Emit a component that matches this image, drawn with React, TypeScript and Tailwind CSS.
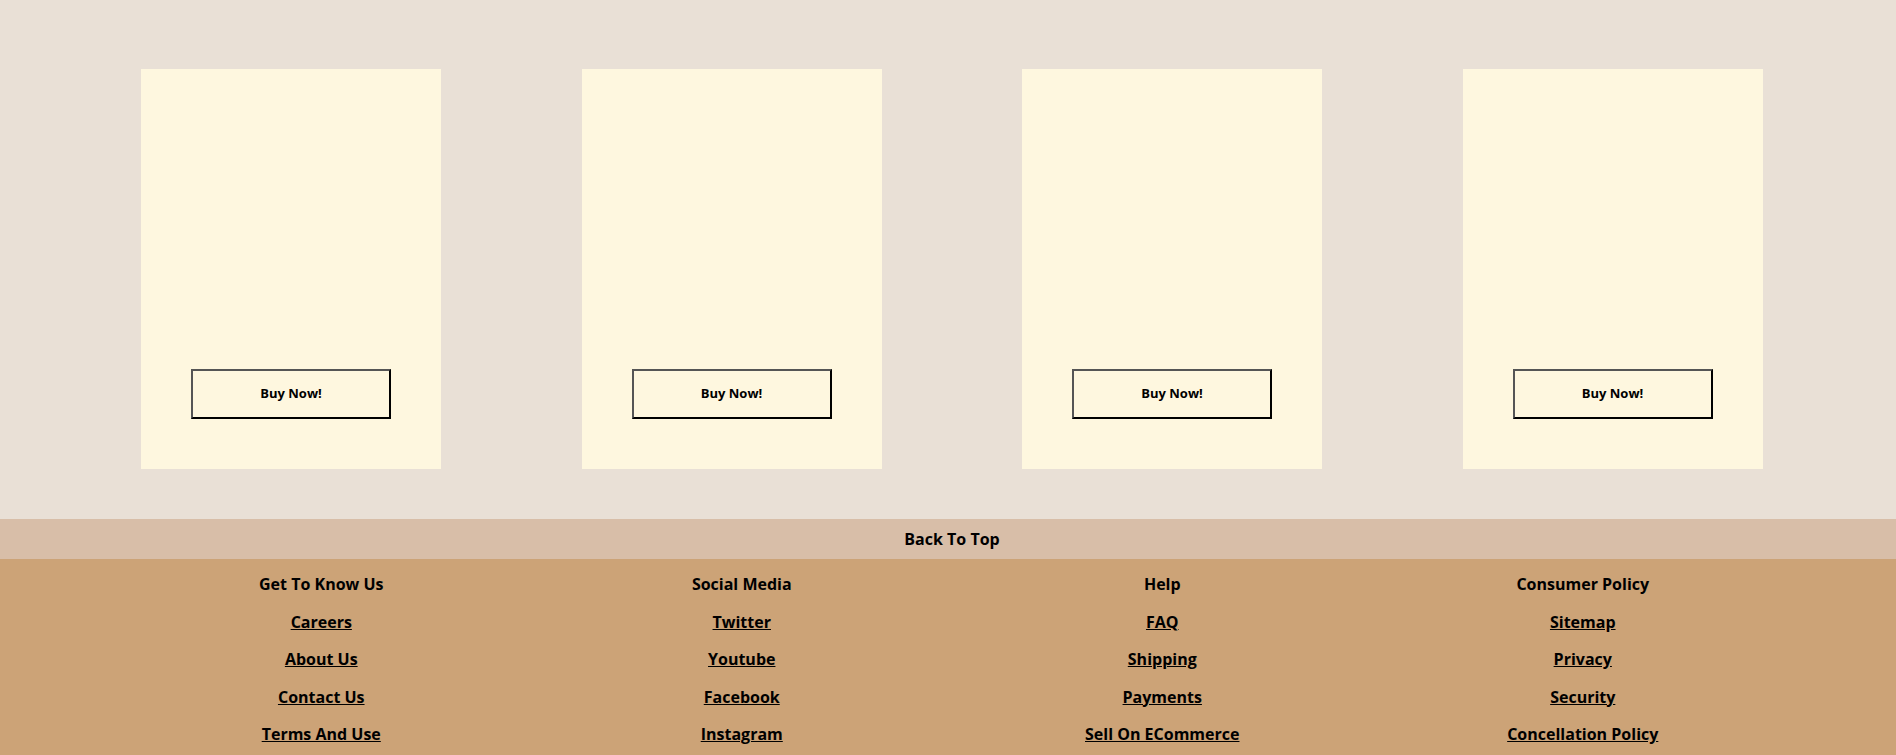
import React from 'react';

const columns = [
  { title: 'Get To Know Us', links: ['Careers', 'About Us', 'Contact Us', 'Terms And Use'] },
  { title: 'Social Media', links: ['Twitter', 'Youtube', 'Facebook', 'Instagram'] },
  { title: 'Help', links: ['FAQ', 'Shipping', 'Payments', 'Sell On ECommerce'] },
  { title: 'Consumer Policy', links: ['Sitemap', 'Privacy', 'Security', 'Concellation Policy'] },
];

const ProductCard: React.FC = () => (
  <div className="w-[300px] h-[400px] bg-[#fef7df] flex flex-col items-center justify-end pb-[50px]">
    <button className="w-[200px] h-[50px] border-2 border-t-[#555] border-l-[#555] border-b-black border-r-black text-[13px] font-bold text-black">
      Buy Now!
    </button>
  </div>
);

const App: React.FC = () => {
  return (
    <div className="min-h-screen bg-[#cca377]" style={{ fontFamily: '"Open Sans", "Noto Sans", sans-serif' }}>
      <section className="bg-[#e9e0d6] pt-[69px] pb-[50px] pl-[141px] flex gap-[140.5px]">
        {[0, 1, 2, 3].map((i) => (
          <ProductCard key={i} />
        ))}
      </section>

      <div className="h-[40px] bg-[#d8bea8] flex items-center justify-center pl-[8px]">
        <span className="text-[16px] font-bold text-black">Back To Top</span>
      </div>

      <footer className="pl-[111px] pr-[103px] pt-[13px] grid grid-cols-4">
        {columns.map((col) => (
          <div key={col.title} className="flex flex-col items-center gap-[13.5px]">
            <h3 className="text-[16px] leading-6 font-bold text-black">{col.title}</h3>
            {col.links.map((link) => (
              <a key={link} href="#" className="text-[16px] leading-6 font-bold text-black underline">
                {link}
              </a>
            ))}
          </div>
        ))}
      </footer>
    </div>
  );
};

export default App;
